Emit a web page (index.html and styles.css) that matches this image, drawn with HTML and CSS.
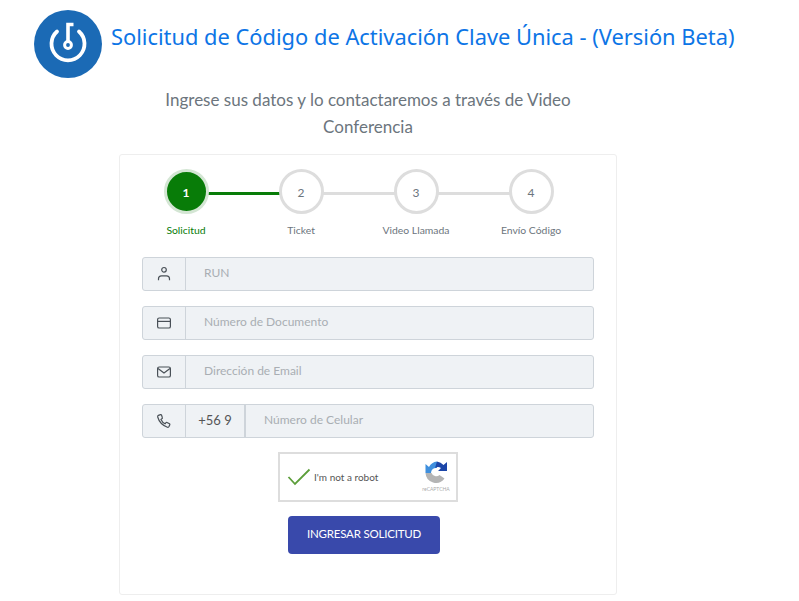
FILE: index.html
```html
<!DOCTYPE html>
<html lang="es">
<head>
    <meta charset="UTF-8">
    <meta name="viewport" content="width=device-width, initial-scale=1.0">
    <title>Solicitud de Código de Activación</title>
    <link rel="stylesheet" href="styles.css">
</head>
<body>

    <header class="top">
        <svg class="logo" viewBox="0 0 68 68" width="68" height="68">
            <circle cx="34" cy="34" r="34" fill="#1b6ab5"/>
            <path d="M23 21.500a16.500 16.500 0 1 0 22 0" fill="none" stroke="#fff" stroke-width="3.800" stroke-linecap="round"/>
            <path d="M34 31V14.500h5.500" fill="none" stroke="#fff" stroke-width="3.600"/>
            <circle cx="34" cy="35" r="3.400" fill="none" stroke="#fff" stroke-width="3"/>
        </svg>
        <h1 class="title">Solicitud de Código de Activación Clave Única - (Versión Beta)</h1>
    </header>

    <main class="page">
        <p class="lead">Ingrese sus datos y lo contactaremos a través de Video Conferencia</p>

        <div class="card">
            <ul class="steps">
                <li class="step active"><span class="dot">1</span><span class="label">Solicitud</span></li>
                <li class="step"><span class="dot">2</span><span class="label">Ticket</span></li>
                <li class="step"><span class="dot">3</span><span class="label">Video Llamada</span></li>
                <li class="step"><span class="dot">4</span><span class="label">Envío Código</span></li>
            </ul>

            <form class="fields">
                <div class="field">
                    <span class="addon">
                        <svg viewBox="0 0 16 16" width="16" height="16" class="ico"><circle cx="8" cy="3.800" r="2.300"/><path d="M2.500 14.200v-1.400a3 3 0 0 1 3-3h5a3 3 0 0 1 3 3v1.400"/></svg>
                    </span>
                    <input class="input" type="text" placeholder="RUN">
                </div>
                <div class="field">
                    <span class="addon">
                        <svg viewBox="0 0 16 16" width="16" height="16" class="ico"><rect x="1.600" y="3" width="12.800" height="10" rx="1.600"/><path d="M1.600 6.400h12.800"/></svg>
                    </span>
                    <input class="input" type="text" placeholder="Número de Documento">
                </div>
                <div class="field">
                    <span class="addon">
                        <svg viewBox="0 0 16 16" width="16" height="16" class="ico"><rect x="1.600" y="3" width="12.800" height="10" rx="1.600"/><path d="M2 4.400l6 4.600 6-4.600"/></svg>
                    </span>
                    <input class="input" type="text" placeholder="Dirección de Email">
                </div>
                <div class="field">
                    <span class="addon">
                        <svg viewBox="0 0 16 16" width="16" height="16" class="ico"><path d="M4.600 1.600L2.400 2.400c-.6.300-.9.900-.7 1.600 1.400 5 4.700 8.300 9.700 10.200.6.200 1.300 0 1.600-.6l.8-1.800c.2-.4 0-.8-.3-1l-2.500-1.300c-.4-.2-.8-.1-1 .2l-.9 1.100C7.400 10 5.900 8.400 5 6.400l1.100-.9c.3-.3.4-.7.2-1L5.500 2c-.2-.4-.5-.5-.9-.4z"/></svg>
                    </span>
                    <span class="addon prefix">+56 9</span>
                    <input class="input" type="text" placeholder="Número de Celular">
                </div>
            </form>

            <div class="captcha">
                <svg class="check" viewBox="0 0 24 18" width="24" height="18"><path d="M1.500 9l6.500 7L22.500 1.500" fill="none" stroke="#5c9e3a" stroke-width="1.800"/></svg>
                <span class="captcha-text">I'm not a robot</span>
                <div class="captcha-brand">
                    <svg viewBox="0 0 24 24" width="24" height="24">
                        <path d="M1.500 13a10.500 10.500 0 0 0 19 5.500l-5-3.500a5 5 0 0 1-8-2z" fill="#b4b4b4"/>
                        <path d="M1.500 13V4L5 7a10.500 10.500 0 0 1 8-5.500V8a5 5 0 0 0-6 5z" fill="#3f8fdd"/>
                        <path d="M13 1.500A10.500 10.500 0 0 1 19.500 5L23 2v9h-9l3-3a5 5 0 0 0-6 0z" fill="#1c46a8"/>
                    </svg>
                    <span class="captcha-small">reCAPTCHA</span>
                </div>
            </div>

            <button class="send" type="button">INGRESAR SOLICITUD</button>
        </div>
    </main>

</body>
</html>
```

FILE: styles.css
```css
body {
    margin: 0;
    font-family: Lato, sans-serif;
    background-color: white;
    color: #6c757d;
    height: 601px;
    overflow: hidden;
}

.top {
    display: flex;
    align-items: flex-start;
    padding: 10px 0 0 34px;
    gap: 9px;
}

.logo {
    flex: none;
}

.title {
    margin: 12px 0 0;
    font-family: "Noto Sans", sans-serif;
    font-size: 21.850px;
    font-weight: normal;
    line-height: 30px;
    color: #0d75e6;
    white-space: nowrap;
}

.page {
    width: 498px;
    margin-left: 119px;
}

.lead {
    width: 430px;
    margin: 8px auto 14px;
    font-size: 17px;
    line-height: 27px;
    text-align: center;
}

.card {
    height: 441px;
    box-sizing: border-box;
    border: 1px solid #eeeeee;
    border-radius: 3px;
    padding: 14px 22px 0;
}

.steps {
    display: flex;
    list-style: none;
    margin: 0 0 19px -13.500px;
    padding: 0;
}

.step {
    position: relative;
    flex: none;
    width: 115px;
    display: flex;
    flex-direction: column;
    align-items: center;
}

.step + .step::before {
    content: "";
    position: absolute;
    top: 23px;
    right: 50%;
    width: 115px;
    height: 3px;
    background-color: #dddddd;
}

.step:nth-child(2)::before {
    background-color: #087c08;
}

.dot {
    position: relative;
    z-index: 1;
    width: 45px;
    height: 45px;
    box-sizing: border-box;
    border: 3px solid #dddddd;
    border-radius: 50%;
    background-color: white;
    font-size: 12px;
    line-height: 42px;
    text-align: center;
}

.active .dot {
    background-color: #087c08;
    border-color: #d4e6d4;
    color: white;
    font-weight: bold;
}

.label {
    margin-top: 8px;
    font-size: 10.400px;
    line-height: 16px;
    white-space: nowrap;
}

.active .label {
    color: #087c08;
}

.fields {
    display: flex;
    flex-direction: column;
    gap: 15px;
}

.field {
    display: flex;
    height: 34px;
    box-sizing: border-box;
    border: 1px solid #ced4da;
    border-radius: 3px;
    background-color: #eff2f5;
}

.addon {
    flex: none;
    width: 42px;
    display: flex;
    align-items: center;
    justify-content: center;
    border-right: 1px solid #ced4da;
}

.prefix {
    width: 60px;
    border-right-width: 2px;
    box-sizing: border-box;
    padding-bottom: 2px;
    font-size: 13px;
    color: #555;
}

.ico {
    fill: none;
    stroke: #495057;
    stroke-width: 1.200;
}

.input {
    flex: 1;
    min-width: 0;
    border: 0;
    padding: 0 18px 4px;
    background: transparent;
    font-family: inherit;
    font-size: 12px;
}

.input::placeholder {
    color: #a9aeb3;
    opacity: 1;
}

.captcha {
    display: flex;
    align-items: center;
    width: 180px;
    height: 50px;
    box-sizing: border-box;
    margin: 14px auto 14px;
    border: 2px solid #dddddd;
    background-color: white;
    padding-left: 7px;
}

.captcha-text {
    margin-left: 3px;
    font-size: 10px;
    color: #555;
}

.captcha-brand {
    margin-left: auto;
    margin-right: 3px;
    width: 34px;
    display: flex;
    flex-direction: column;
    align-items: center;
}

.captcha-small {
    font-size: 5px;
    line-height: 10px;
    color: #aaa;
}

.send {
    display: block;
    width: 152px;
    height: 38px;
    margin: 0 0 0 146px;
    padding-bottom: 5px;
    border: 0;
    border-radius: 4px;
    background-color: #3949ab;
    color: white;
    font-family: inherit;
    font-size: 11.500px;
    letter-spacing: -0.2px;
    cursor: pointer;
}
```
